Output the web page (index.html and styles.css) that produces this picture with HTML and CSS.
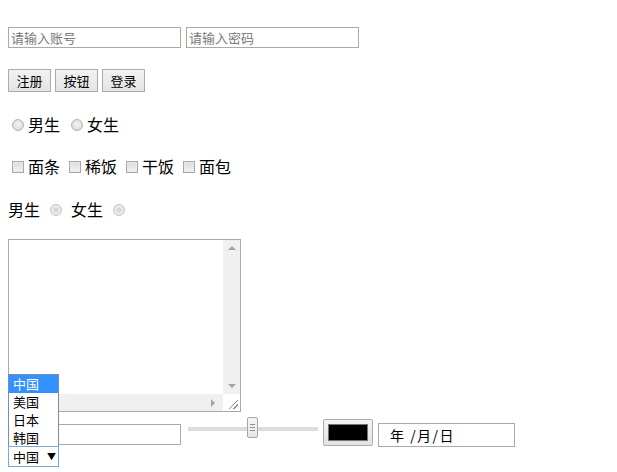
FILE: index.html
```html
<!DOCTYPE html>
<html lang="zh-CN">
<head>
<meta charset="utf-8">
<title>表单</title>
<link rel="stylesheet" href="styles.css">
</head>
<body>
<div class="row row-inputs">
  <input class="text" type="text" placeholder="请输入账号">
  <input class="text" type="password" placeholder="请输入密码">
</div>
<div class="row row-buttons">
  <button class="btn">注册</button>
  <button class="btn">按钮</button>
  <button class="btn">登录</button>
</div>
<div class="row row-choice radios">
  <span class="radio"></span><span class="lbl">男生</span>
  <span class="radio"></span><span class="lbl">女生</span>
</div>
<div class="row row-choice checks">
  <span class="check"></span><span class="lbl">面条</span>
  <span class="check"></span><span class="lbl">稀饭</span>
  <span class="check"></span><span class="lbl">干饭</span>
  <span class="check"></span><span class="lbl">面包</span>
</div>
<div class="row row-choice radios2">
  <span class="lbl">男生</span><span class="radio dot"></span>
  <span class="lbl">女生</span><span class="radio dot"></span>
</div>
<div class="textarea">
  <div class="ta-body"></div>
  <div class="vscroll"><span class="arr up"></span><span class="arr down"></span></div>
  <div class="hscroll"><span class="arr right"></span></div>
  <div class="corner"><span class="grip"></span></div>
</div>
<div class="row row-misc">
  <div class="text misc-input"></div>
  <div class="range"><span class="track"></span><span class="thumb"><i></i><i></i><i></i></span></div>
  <div class="color"><span class="swatch"></span></div>
  <div class="date">年 /月/日</div>
</div>
<div class="row row-select">
  <div class="select">
    <span class="sel-val">中国</span><span class="sel-arrow">▼</span>
    <ul class="dropdown">
      <li class="opt active">中国</li>
      <li class="opt">美国</li>
      <li class="opt">日本</li>
      <li class="opt">韩国</li>
    </ul>
  </div>
</div>
</body>
</html>
```
FILE: styles.css
```css
html, body {
  margin: 0;
  padding: 0;
  background: #fff;
}
body {
  padding: 8px;
  font-family: "Noto Sans CJK SC", "Microsoft YaHei", sans-serif;
  color: #000;
}
.row {
  display: flex;
  align-items: center;
}
.row-inputs {
  margin-top: 19px;
  height: 21px;
  gap: 5px;
}
.text {
  box-sizing: border-box;
  width: 173px;
  height: 21px;
  margin: 0;
  padding: 0 2px;
  border: 1px solid #a9a9a9;
  background: #fff;
  font-family: "Noto Sans CJK SC", sans-serif;
  font-size: 13px;
  line-height: 19px;
  outline: none;
}
.text::placeholder {
  color: #7a7a7a;
}
.row-buttons {
  margin-top: 21px;
  height: 23px;
  gap: 4px;
}
.btn {
  box-sizing: border-box;
  width: 43px;
  height: 23px;
  margin: 0;
  padding: 0;
  border: 1px solid #acacac;
  background: linear-gradient(#f2f2f2, #e4e4e4);
  font-family: "Noto Sans CJK SC", sans-serif;
  font-size: 13px;
  line-height: 21px;
  color: #000;
}
.row-choice {
  height: 21px;
  font-size: 16px;
}
.radios { margin-top: 22px; padding-left: 4px; }
.checks { margin-top: 21px; padding-left: 4px; }
.radios2 { margin-top: 22px; }
.lbl {
  line-height: 21px;
  white-space: nowrap;
}
.radio {
  box-sizing: border-box;
  width: 12px;
  height: 12px;
  border-radius: 50%;
  border: 1px solid #b3b3b3;
  background: radial-gradient(circle at 50% 45%, #f4f4f4 0, #e2e2e2 55%, #d2d2d2 100%);
}
.radios .radio { margin-right: 4px; }
.radios .lbl + .radio { margin-left: 11px; }
.check {
  box-sizing: border-box;
  width: 12px;
  height: 12px;
  border: 1px solid #a8a8a8;
  background: linear-gradient(#dcdcdc, #f2f2f2);
  box-shadow: inset 0 0 0 1px #eaeaea;
  margin-right: 4px;
}
.checks .lbl + .check { margin-left: 9px; }
.radio.dot {
  border-color: #c4c4c4;
  background: radial-gradient(circle, #d8d8d8 0, #d8d8d8 2px, #ececec 3px, #e4e4e4 100%);
  margin-left: 10px;
  margin-right: 9px;
}
.textarea {
  box-sizing: border-box;
  margin-top: 19px;
  width: 233px;
  height: 173px;
  border: 1px solid #a9a9a9;
  display: grid;
  grid-template-columns: 1fr 17px;
  grid-template-rows: 1fr 17px;
  background: #fff;
}
.vscroll {
  background: #f0f0f0;
  display: flex;
  flex-direction: column;
  justify-content: space-between;
  align-items: center;
  padding: 6px 0;
}
.hscroll {
  background: #f0f0f0;
  display: flex;
  justify-content: flex-end;
  align-items: center;
  padding-right: 8px;
}
.arr {
  width: 0;
  height: 0;
  border: 4px solid transparent;
}
.arr.up { border-bottom-color: #a3a3a3; border-top-width: 0; }
.arr.down { border-top-color: #a3a3a3; border-bottom-width: 0; }
.arr.right { border-left-color: #a3a3a3; border-right-width: 0; }
.corner {
  background: #fff;
  display: flex;
  align-items: flex-end;
  justify-content: flex-end;
}
.grip {
  width: 9px;
  height: 9px;
  margin: 0 2px 2px 0;
  background: linear-gradient(135deg, transparent 45%, #8a8a8a 45%, #8a8a8a 52%, transparent 52%, transparent 70%, #8a8a8a 70%, #8a8a8a 78%, transparent 78%);
}
.row-misc {
  margin-top: 7px;
  height: 27px;
  align-items: flex-start;
}
.misc-input {
  margin-top: 5px;
}
.range {
  position: relative;
  width: 130px;
  height: 27px;
  margin-left: 7px;
}
.track {
  position: absolute;
  left: 0;
  right: 0;
  top: 8px;
  height: 4px;
  background: #dcdcdc;
}
.thumb {
  position: absolute;
  left: 59px;
  top: -2px;
  box-sizing: border-box;
  width: 11px;
  height: 21px;
  border: 1px solid #a6a6a6;
  border-radius: 2px;
  background: linear-gradient(#f4f4f4, #e6e6e6);
  display: flex;
  flex-direction: column;
  justify-content: center;
  align-items: center;
  gap: 2px;
}
.thumb i {
  display: block;
  width: 5px;
  height: 1px;
  background: #8f8f8f;
}
.color {
  box-sizing: border-box;
  width: 50px;
  height: 27px;
  margin-left: 5px;
  border: 1px solid #acacac;
  border-radius: 2px;
  background: linear-gradient(#f3f3f3, #e2e2e2);
  padding: 4px;
}
.swatch {
  display: block;
  box-sizing: border-box;
  width: 40px;
  height: 17px;
  background: #000;
  border: 1px solid #777;
}
.date {
  box-sizing: border-box;
  width: 137px;
  height: 24px;
  margin-top: 4px;
  margin-left: 5px;
  border: 1px solid #a9a9a9;
  padding-left: 11px;
  font-size: 14px;
  letter-spacing: 1.5px;
  line-height: 22px;
  white-space: pre;
}
.row-select {
  height: 21px;
}
.select {
  position: relative;
  box-sizing: border-box;
  width: 51px;
  height: 21px;
  border: 1px solid #7ca7d8;
  font-size: 13px;
  display: flex;
  align-items: center;
  padding-left: 4px;
  background: #fff;
}
.sel-val {
  line-height: 19px;
}
.sel-arrow {
  font-size: 9px;
  margin-left: 8px;
  line-height: 19px;
}
.dropdown {
  position: absolute;
  left: -1px;
  bottom: 20px;
  box-sizing: border-box;
  width: 51px;
  height: 72px;
  overflow: hidden;
  margin: 0;
  padding: 0;
  list-style: none;
  border: 1px solid #7a8eaa;
  border-bottom: none;
  background: #fff;
}
.opt {
  height: 18px;
  line-height: 18px;
  padding-left: 4px;
  font-size: 13px;
}
.opt.active {
  background: #3390ff;
  color: #fff;
}
```
